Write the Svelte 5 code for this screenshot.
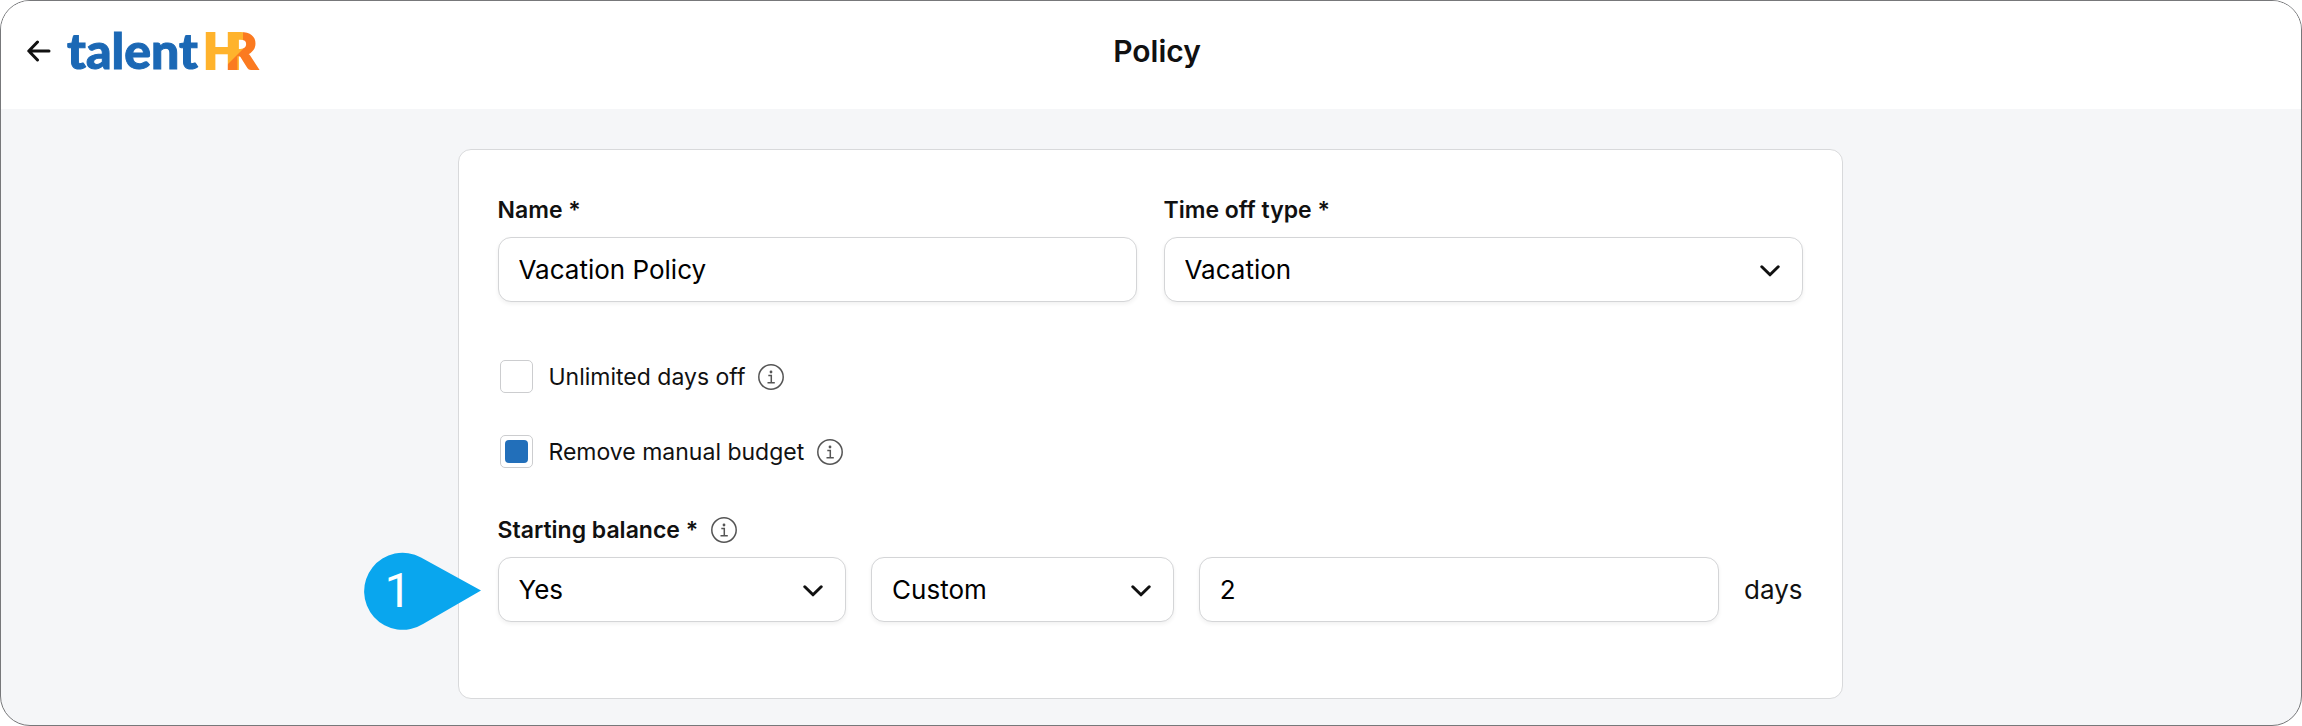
<script>
  let name = "Vacation Policy";
  let timeOffType = "Vacation";
  let unlimited = false;
  let removeManual = true;
  let hasBalance = "Yes";
  let balanceType = "Custom";
  let days = "2";

  const timeOffTypes = ["Vacation", "Sick leave", "Unpaid leave"];
  const balanceOptions = ["Yes", "No"];
  const balanceTypes = ["Custom", "Prorated"];
</script>

{#snippet chevron()}
  <svg class="chevron" viewBox="0 0 20 12" aria-hidden="true">
    <path d="M1.8 1.8 10 9.8l8.200-8" />
  </svg>
{/snippet}

{#snippet info(label)}
  <button type="button" class="info" aria-label={label}>
    <svg viewBox="0 0 26 26" aria-hidden="true">
      <circle cx="13" cy="13" r="12.2" />
      <path d="M10.300 11.500h3v7M9.500 18.700h7.300" />
      <circle class="dot" cx="13" cy="8" r="1.400" />
    </svg>
  </button>
{/snippet}

<div class="page">
  <header>
    <div class="brand">
      <a href="/policies" class="back" aria-label="Back">
        <svg viewBox="0 0 24 22" aria-hidden="true">
          <path d="M22 11H2M10.500 2 1.800 11l8.700 9" />
        </svg>
      </a>
      <a href="/" class="logo" aria-label="talentHR">
        <svg viewBox="0 0 196 44" aria-hidden="true">
          <defs>
            <!-- yellow runs into the top left of the R, orange fills the rest -->
            <pattern id="split" patternUnits="userSpaceOnUse" width="220" height="60">
              <rect width="220" height="60" fill="#fb7a20" />
              <path d="M0 0H176V20L156 40V60H0Z" fill="#ffb32c" />
            </pattern>
          </defs>
          <text class="talent" x="0" y="40">talent</text>
          <text class="hr" x="136" y="40" fill="#ffb32c" stroke="#ffb32c">H</text>
          <text class="hr" x="158" y="40" fill="url(#split)" stroke="url(#split)">R</text>
        </svg>
      </a>
    </div>
    <h1>Policy</h1>
  </header>

  <main>
    <form class="card" on:submit|preventDefault>
      <div class="fields">
        <div class="field">
          <label for="name">Name *</label>
          <input id="name" class="control" type="text" bind:value={name} />
        </div>
        <div class="field">
          <label for="type">Time off type *</label>
          <div class="select">
            <select id="type" class="control" bind:value={timeOffType}>
              {#each timeOffTypes as type}
                <option value={type}>{type}</option>
              {/each}
            </select>
            {@render chevron()}
          </div>
        </div>
      </div>

      <div class="checks">
        <div class="check">
          <input id="unlimited" type="checkbox" bind:checked={unlimited} />
          <label for="unlimited">Unlimited days off</label>
          {@render info("About unlimited days off")}
        </div>
        <div class="check">
          <input id="manual" type="checkbox" bind:checked={removeManual} />
          <label for="manual">Remove manual budget</label>
          {@render info("About manual budget")}
        </div>
      </div>

      <div class="field">
        <div class="label-row">
          <label for="balance">Starting balance *</label>
          {@render info("About starting balance")}
        </div>
        <div class="balance">
          <div class="marker">
            <svg viewBox="0 0 118 78" aria-hidden="true">
              <path d="M58 5.500 118 38.500 60 72A38.500 38.500 0 1 1 58 5.500Z" />
            </svg>
            <span>1</span>
          </div>
          <div class="select">
            <select id="balance" class="control" bind:value={hasBalance}>
              {#each balanceOptions as option}
                <option value={option}>{option}</option>
              {/each}
            </select>
            {@render chevron()}
          </div>
          <div class="select">
            <select class="control" aria-label="Balance type" bind:value={balanceType}>
              {#each balanceTypes as type}
                <option value={type}>{type}</option>
              {/each}
            </select>
            {@render chevron()}
          </div>
          <input id="days" class="control" type="text" inputmode="numeric" bind:value={days} />
          <label class="unit" for="days">days</label>
        </div>
      </div>
    </form>
  </main>
</div>

<style>
  :global(body) {
    margin: 0;
    background: #fff;
  }

  .page,
  .page * {
    box-sizing: border-box;
  }

  .page {
    min-height: 100vh;
    border: 1px solid #77787a;
    border-radius: 30px;
    overflow: hidden;
    background: #f5f6f8;
    color: #111;
    font-family: Inter, "Liberation Sans", sans-serif;
  }

  header {
    display: grid;
    grid-template-columns: 1fr auto 1fr;
    align-items: center;
    padding: 24px 14px 32px 26px;
    background: #fff;
  }

  .brand {
    display: flex;
    align-items: center;
    gap: 16px;
    height: 52px;
  }

  .back svg {
    display: block;
    width: 24px;
    height: 22px;
    fill: none;
    stroke: #111;
    stroke-width: 3;
    stroke-linecap: round;
    stroke-linejoin: round;
  }

  .logo svg {
    display: block;
    width: 196px;
    height: 44px;
    overflow: visible;
  }

  .talent,
  .hr {
    font-family: Lato, sans-serif;
    font-size: 50px;
    font-weight: 900;
  }

  .talent {
    fill: #1b68b5;
    stroke: #1b68b5;
    stroke-width: 1;
  }

  .hr {
    stroke-width: 2;
  }

  h1 {
    margin: 0;
    font-size: 30px;
    line-height: 36px;
    font-weight: 600;
  }

  main {
    padding: 40px 26px 26px 24px;
  }

  .card {
    max-width: 1385px;
    margin: 0 auto;
    padding: 46px 39px 76px;
    border: 1px solid #d8d9db;
    border-radius: 13px;
    background: #fff;
  }

  .fields {
    display: grid;
    grid-template-columns: 1fr 1fr;
    gap: 27px;
  }

  .field label {
    display: block;
    font-size: 23px;
    line-height: 28px;
    font-weight: 600;
  }

  .field > label,
  .label-row {
    margin-bottom: 13px;
  }

  .control {
    display: block;
    width: 100%;
    height: 65px;
    margin: 0;
    padding: 0 20px;
    border: 1px solid #d4d5d7;
    border-radius: 13px;
    background: #fff;
    box-shadow: 0 2px 4px rgba(0, 0, 0, 0.06);
    color: #000;
    font-family: inherit;
    font-size: 26px;
    appearance: none;
  }

  .select {
    position: relative;
  }

  .chevron {
    position: absolute;
    top: 28px;
    right: 23px;
    width: 20px;
    height: 12px;
    fill: none;
    stroke: #111;
    stroke-width: 3;
    stroke-linecap: round;
    stroke-linejoin: round;
    pointer-events: none;
  }

  .checks {
    display: grid;
    gap: 42px;
    padding: 58px 2px 48px;
  }

  .check,
  .label-row {
    display: flex;
    align-items: center;
  }

  .check input {
    width: 33px;
    height: 33px;
    margin: 0 16px 0 0;
    padding: 4px;
    border: 1px solid #cccdcf;
    border-radius: 5px;
    background: #fff;
    appearance: none;
  }

  .check input:checked::before {
    content: "";
    display: block;
    height: 23px;
    border-radius: 4px;
    background: #226fba;
  }

  .check label {
    font-size: 23px;
    line-height: 28px;
  }

  .info {
    margin: 0 0 0 13px;
    padding: 0;
    border: none;
    background: none;
    cursor: pointer;
  }

  .info svg {
    display: block;
    width: 26px;
    height: 26px;
    fill: none;
    stroke: #555;
    stroke-width: 1.5;
  }

  .info .dot {
    fill: #555;
    stroke: none;
  }

  .balance {
    position: relative;
    display: grid;
    grid-template-columns: 349fr 303fr 521fr auto;
    align-items: center;
    gap: 25px;
  }

  .balance .unit {
    font-size: 26px;
    font-weight: 400;
  }

  .marker {
    position: absolute;
    top: -5px;
    right: calc(100% + 17px);
    width: 118px;
  }

  .marker svg {
    display: block;
    width: 118px;
    height: 78px;
    fill: #09a6ee;
  }

  .marker span {
    position: absolute;
    top: 0;
    left: 22px;
    color: #fff;
    font-family: Roboto, sans-serif;
    font-size: 48px;
    line-height: 78px;
  }
</style>
